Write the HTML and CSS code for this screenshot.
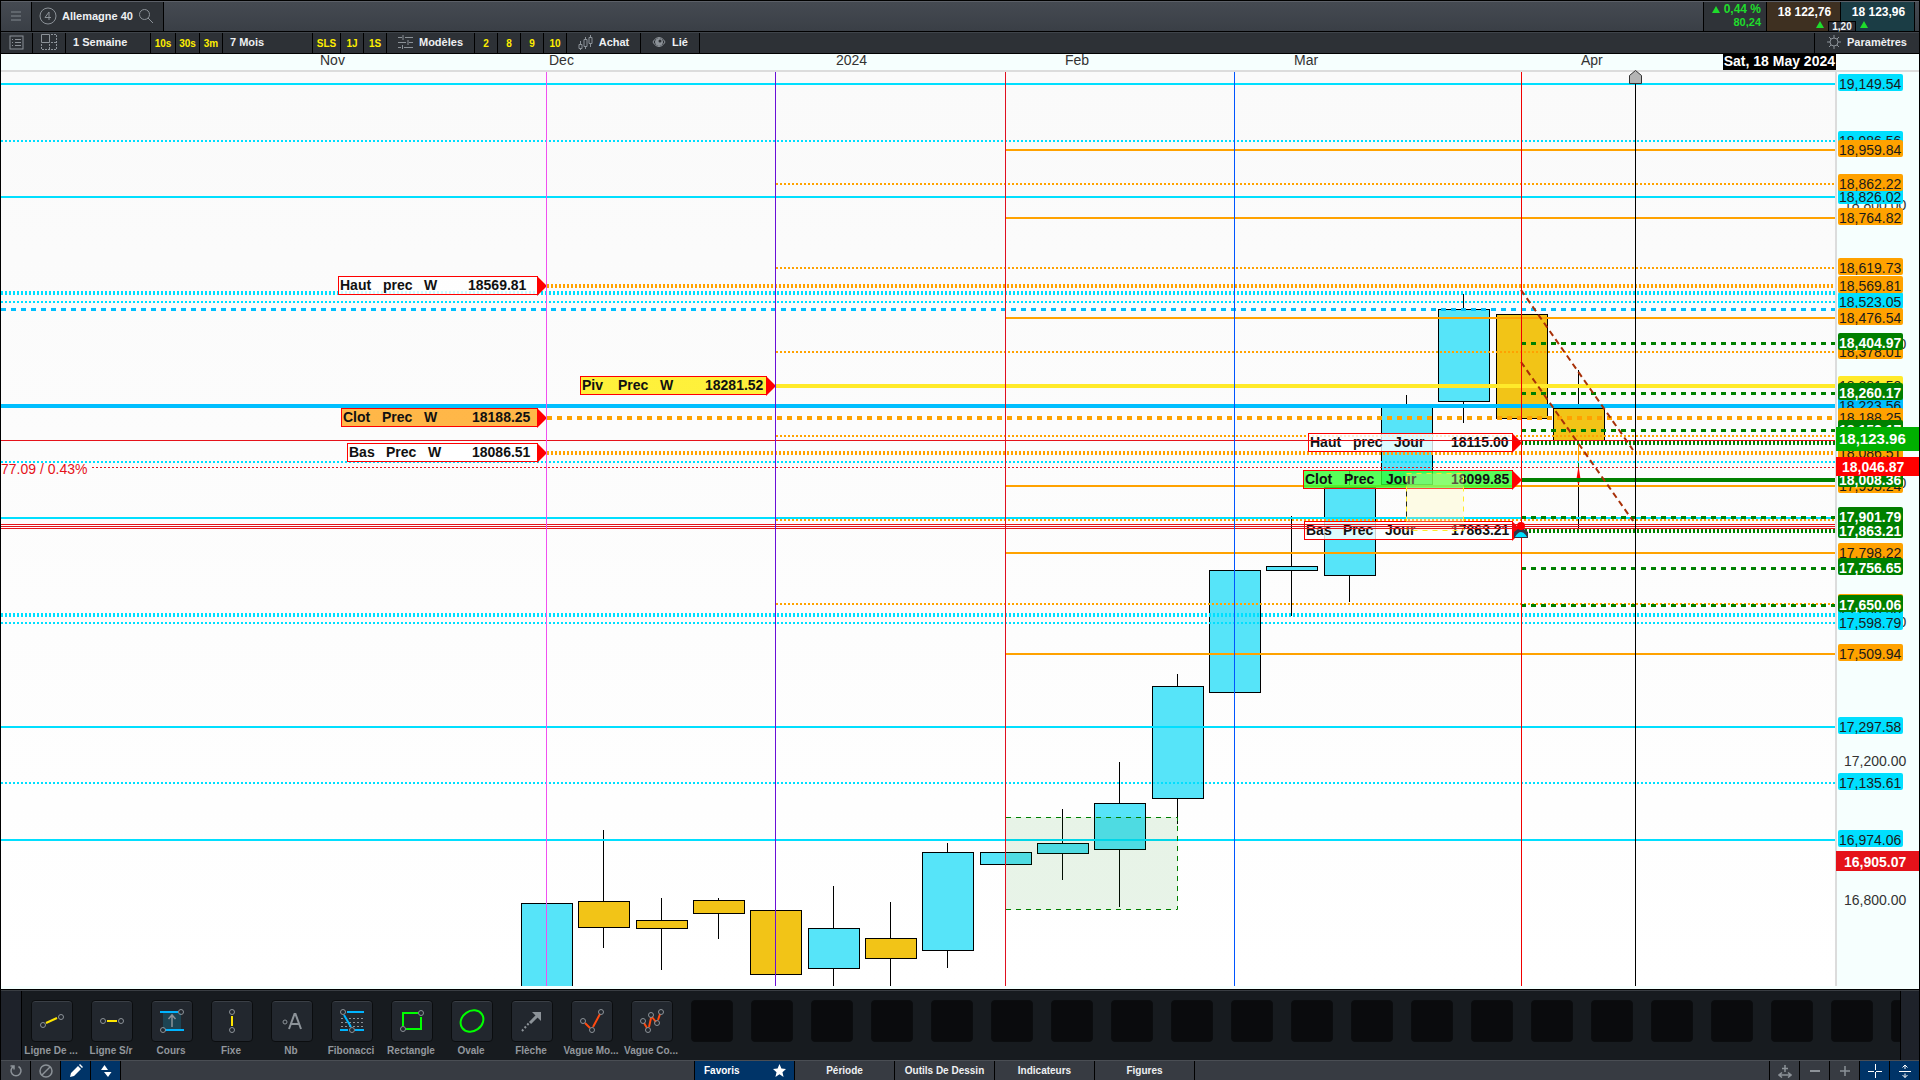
FILE: index.html
```html
<!DOCTYPE html>
<html lang="fr">
  <head>
    <meta charset="UTF-8" />
    <meta name="viewport" content="width=device-width, initial-scale=1.0" />
    <title>Allemagne 40</title>
    <link rel="stylesheet" href="styles.css">
  </head>

  <body>
    <header class="title-bar">
      <button class="menu-btn" aria-label="Menu">
        <svg width="12" height="12" viewBox="0 0 12 12"><path d="M1 2h10M1 6h10M1 10h10" stroke="#60666d" stroke-width="2" /></svg>
      </button>
      <button class="market-tab">
        <svg class="icon" width="18" height="18" viewBox="0 0 18 18"><circle cx="9" cy="9" r="8" /><path d="M10 13V5L6 10.500h6" /></svg>
        <span>Allemagne 40</span>
        <svg class="icon" width="16" height="16" viewBox="0 0 16 16"><circle cx="6.500" cy="6.500" r="5" /><path d="M10 10l5 5" /></svg>
      </button>
      <div class="change">
        <span><i class="up"></i>0,44 %</span>
        <small>80,24</small>
      </div>
      <button class="quote sell">18 122,76 <i class="up"></i></button>
      <button class="quote buy">18 123,96 <i class="up"></i></button>
      <span class="spread">1,20</span>
    </header>

    <nav class="toolbar">
      <button class="w32" aria-label="Liste">
        <svg class="icon" width="15" height="15" viewBox="0 0 15 15"><rect x="1" y="1" width="13" height="13" /><path d="M3 4.500h1M3 7.500h1M3 10.500h1M6 4.500h6M6 7.500h6M6 10.500h6" /></svg>
      </button>
      <button class="w33" aria-label="Disposition">
        <svg class="icon" width="16" height="16" viewBox="0 0 16 16"><path d="M8.500 .5h-8v8h8z" /><path d="M10 .5h5.500v15H.5V10M8.500 10v5M10 8.500h5" stroke-dasharray="2 1" /></svg>
      </button>
      <button class="w85 left">1 Semaine</button>
      <button class="w25 short">10s</button>
      <button class="w24 short">30s</button>
      <button class="w23 short">3m</button>
      <button class="w90 left">7 Mois</button>
      <button class="w28 short">SLS</button>
      <button class="w23 short">1J</button>
      <button class="w23 short">1S</button>
      <button class="w88">
        <svg class="icon" width="15" height="14" viewBox="0 0 15 14"><path d="M0 2.500h4M7 2.500h8M0 7.500h8M11 7.500h4M0 12.500h3M6 12.500h9M5 0v5M10 5v5M4.500 10v4" /></svg>
        <span>Modèles</span>
      </button>
      <button class="w23 short">2</button>
      <button class="w23 short">8</button>
      <button class="w23 short">9</button>
      <button class="w23 short">10</button>
      <button class="w74">
        <svg class="icon" width="15" height="15" viewBox="0 0 15 15"><path d="M1 9.500h3v4H1zM6 4.500h3v7H6zM11 2.500h3v6h-3zM2.500 6v3M2.500 13v2M7.500 2v2M7.500 12v2M12.500 0v2M12.500 9v3" /></svg>
        <span>Achat</span>
      </button>
      <button class="w59">
        <svg class="icon" width="14" height="12" viewBox="0 0 14 12"><path d="M1 6c3-6 9-6 12 0c-3 6-9 6-12 0z" /><circle cx="7" cy="6" r="3.500" fill="#8c9298" /><circle cx="8" cy="5" r="1.500" fill="#2d3136" stroke="none" /></svg>
        <span>Lié</span>
      </button>
      <button class="settings">
        <svg class="icon" width="14" height="14" viewBox="0 0 14 14"><circle cx="7" cy="7" r="4" /><path d="M7 0v3M7 11v3M0 7h3M11 7h3M2 2l2 2M10 10l2 2M2 12l2-2M10 4l2-2" /></svg>
        <span>Paramètres</span>
      </button>
    </nav>

    <main class="chart">
      <svg id="plot" class="plot" role="img" aria-label="Allemagne 40, 1 semaine"></svg>
      <svg id="prices" class="prices" role="img" aria-label="Prix"></svg>
    </main>

    <section class="favorites">
      <div class="gutter"></div>
      <div class="tools" id="tools">
        <div class="tool">
          <button aria-labelledby="t1"><svg class="icon" viewBox="0 0 40 40"><path class="yellow" d="M14 22l11-5" /><circle cx="11" cy="24" r="2.500" /><circle cx="29" cy="16" r="2.500" /></svg></button>
          <span id="t1">Ligne De ...</span>
        </div>
        <div class="tool">
          <button aria-labelledby="t2"><svg class="icon" viewBox="0 0 40 40"><path class="yellow" d="M15 20h10" /><circle cx="11" cy="20" r="2.500" /><circle cx="29" cy="20" r="2.500" /></svg></button>
          <span id="t2">Ligne S/r</span>
        </div>
        <div class="tool">
          <button aria-labelledby="t3"><svg class="icon" viewBox="0 0 40 40"><rect x="11" y="12" width="18" height="16" fill="#1d4453" stroke="none" /><path class="blue" d="M8 11h18M13 29h19" /><path d="M20 26V14M16.500 18L20 14l3.500 4" stroke-width="1.500" /><circle cx="29" cy="11" r="2.500" /><circle cx="11" cy="29" r="2.500" /></svg></button>
          <span id="t3">Cours</span>
        </div>
        <div class="tool">
          <button aria-labelledby="t4"><svg class="icon" viewBox="0 0 40 40"><path class="yellow" d="M20 15v10" /><circle cx="20" cy="11" r="2.500" /><circle cx="20" cy="29" r="2.500" /></svg></button>
          <span id="t4">Fixe</span>
        </div>
        <div class="tool">
          <button aria-labelledby="t5"><svg class="icon" viewBox="0 0 40 40"><circle cx="13" cy="21" r="2" /><path d="M17 28l5.500-15h1L29 28M19 23h8" stroke-width="2" /></svg></button>
          <span id="t5">Nb</span>
        </div>
        <div class="tool">
          <button aria-labelledby="t6"><svg class="icon" viewBox="0 0 40 40"><path d="M9 17.500h23M9 21.500h23M9 25.500h23" stroke-dasharray="2 2" /><path class="blue" d="M15 11h17M8 29h8M23 29h9M12 14l7 12" /><circle cx="11" cy="11" r="2.500" /><circle cx="20" cy="29" r="2.500" /></svg></button>
          <span id="t6">Fibonacci</span>
        </div>
        <div class="tool">
          <button aria-labelledby="t7"><svg class="icon" viewBox="0 0 40 40"><path class="green" d="M26 12H11v13M29 16v12H14" /><circle cx="29" cy="12" r="2.500" /><circle cx="11" cy="28" r="2.500" /></svg></button>
          <span id="t7">Rectangle</span>
        </div>
        <div class="tool">
          <button aria-labelledby="t8"><svg class="icon" viewBox="0 0 40 40"><ellipse class="green" cx="20" cy="20" rx="12" ry="10" transform="rotate(-35 20 20)" /></svg></button>
          <span id="t8">Ovale</span>
        </div>
        <div class="tool">
          <button aria-labelledby="t9"><svg class="icon" viewBox="0 0 40 40"><path d="M10 30l7-8" stroke-width="2" stroke-dasharray="2 2" /><path d="M18 22l9-9" stroke-width="3" /><path d="M20 11h9v9z" fill="#8c9298" stroke="none" /></svg></button>
          <span id="t9">Flèche</span>
        </div>
        <div class="tool">
          <button aria-labelledby="t10"><svg class="icon" viewBox="0 0 40 40"><path class="red" d="M13 22l5 5M21 26l7-13" /><circle cx="11" cy="20" r="2.500" /><circle cx="20" cy="29" r="2.500" /><circle cx="29" cy="11" r="2.500" /></svg></button>
          <span id="t10">Vague Mo...</span>
        </div>
        <div class="tool">
          <button aria-labelledby="t11"><svg class="icon" viewBox="0 0 40 40"><path class="red" d="M12 22l3 5M17 26l2-9M20 16l4 5M26 19l2-6" /><circle cx="11" cy="20" r="2.500" /><circle cx="16" cy="29" r="2.500" /><circle cx="19" cy="14" r="2.500" /><circle cx="25" cy="22" r="2.500" /><circle cx="29" cy="11" r="2.500" /></svg></button>
          <span id="t11">Vague Co...</span>
        </div>
      </div>
      <div class="gutter"></div>
    </section>

    <footer class="bottom-bar">
      <div class="group">
        <button aria-label="Recharger"><svg class="icon" width="14" height="14" viewBox="0 0 14 14"><path d="M9.500 2.500a5 5 0 1 1-5 0M1.500 2h3.500v3.500" stroke-width="1.500" /></svg></button>
        <button aria-label="Effacer"><svg class="icon" width="14" height="14" viewBox="0 0 14 14"><circle cx="7" cy="7" r="6" stroke-width="1.500" /><path d="M3 11l8-8" stroke-width="1.500" /></svg></button>
        <button class="on" aria-label="Dessiner"><svg width="14" height="14" viewBox="0 0 14 14" fill="#fff"><path d="M1 13l1-4 7-7 3 3-7 7zM10 1l1-1 3 3-1 1z" /></svg></button>
        <button class="on" aria-label="Ajuster"><svg width="12" height="12" viewBox="0 0 12 12" fill="#fff"><path d="M1 5l3.500-5L8 5zM4 7h7.500L8 12z" /></svg></button>
      </div>
      <div class="group tabs">
        <button class="on fav">Favoris <svg width="13" height="13" viewBox="0 0 24 24" fill="#fff"><path d="M12 0l3.500 8.500L24 9l-6.500 6 2 9L12 19l-7.500 5 2-9L0 9l8.500-.5z" /></svg></button>
        <button>Période</button>
        <button>Outils De Dessin</button>
        <button>Indicateurs</button>
        <button>Figures</button>
      </div>
      <div class="group right">
        <button aria-label="Largeur"><svg class="icon" width="14" height="14" viewBox="0 0 14 14"><path d="M7 1v7M4 4.500h6M1 11h12M4 8.500L1 11l3 2.500M10 8.500l3 2.500-3 2.500" stroke-width="1.500" /></svg></button>
        <button aria-label="Zoom arrière"><svg class="icon" width="14" height="14" viewBox="0 0 14 14"><path d="M2 7h10" stroke-width="2" /></svg></button>
        <button aria-label="Zoom avant"><svg class="icon" width="14" height="14" viewBox="0 0 14 14"><path d="M2 7h10M7 2v10" stroke-width="1.500" /></svg></button>
        <button class="on" aria-label="Curseur"><svg width="14" height="14" viewBox="0 0 14 14" stroke="#fff"><path d="M0 7.500h6M8 7.500h6M7.500 0v6M7.500 8v6" /></svg></button>
        <button class="on" aria-label="Hauteur"><svg width="14" height="14" viewBox="0 0 14 14" fill="none" stroke="#fff"><path d="M1 7.500h12M7 1v4M7 9.500v4M4.500 3.500L7 1l2.500 2.500M4.500 11L7 13.500 9.500 11" /></svg></button>
      </div>
    </footer>

    <script src="chart.js"></script>
  </body>
</html>
```

FILE: styles.css
```css
* {
  margin: 0;
  padding: 0;
  box-sizing: border-box;
}

body {
  min-height: 100vh;
  display: flex;
  flex-direction: column;
  background: #1a1e24;
  border: 1px solid #000;
  border-bottom: none;
  color: #eef0f2;
  font-family: "Liberation Sans", Arial, sans-serif;
  font-size: 11px;
  font-weight: bold;
  overflow: hidden;
}

button {
  display: flex;
  align-items: center;
  justify-content: center;
  background: none;
  border: none;
  color: inherit;
  font: inherit;
  white-space: nowrap;
  cursor: pointer;
}

.icon {
  fill: none;
  stroke: #8c9298;
  stroke-width: 1;
}

/* Title bar */
.title-bar {
  position: relative;
  display: flex;
  height: 31px;
  background: linear-gradient(#454a52, #3a3f46);
  border-top: 1px solid #5c6068;
  border-bottom: 1px solid #000;
}

.menu-btn {
  width: 31px;
  padding-bottom: 1px;
  border-right: 1px solid #000;
}

.market-tab {
  width: 132px;
  gap: 5px;
  padding: 0 2px 1px 0;
  background: #2f3338;
  border-right: 1px solid #000;
}

.change {
  margin-left: auto;
  width: 64px;
  padding: 0 5px 0 0;
  background: #2f3338;
  border-left: 1px solid #000;
  border-right: 1px solid #000;
  color: #1fdc2c;
  font-size: 12px;
  line-height: 14px;
  text-align: right;
}

.change small {
  display: block;
  font-size: 11px;
  line-height: 12px;
}

.up {
  display: inline-block;
  border: 4px solid transparent;
  border-top: none;
  border-bottom: 7px solid #1fdc2c;
}

.change .up {
  margin-right: 4px;
}

.quote {
  flex-direction: column;
  justify-content: flex-start;
  gap: 2px;
  width: 74px;
  padding: 3px 0 0 2px;
  color: #fff;
  font-size: 12px;
  border-right: 1px solid #000;
}

.sell {
  background: #3e3021;
}

.sell .up {
  margin-left: 30px;
}

.buy {
  background: #1b3d45;
  margin-right: 4px;
}

.buy .up {
  margin-right: 30px;
}

.spread {
  position: absolute;
  right: 63px;
  bottom: 0;
  width: 28px;
  background: #2a2e35;
  border: 1px solid #000;
  border-bottom: none;
  font-size: 10px;
  line-height: 9px;
  text-align: center;
}

/* Toolbar */
.toolbar {
  display: flex;
  height: 22px;
  background: #2d3136;
  border-top: 1px solid #3f444a;
  border-bottom: 1px solid #000;
}

.toolbar button {
  gap: 6px;
  padding-bottom: 2px;
  border-right: 1px solid #000;
}

.toolbar .left {
  justify-content: flex-start;
  padding-left: 7px;
}

.toolbar .short {
  padding-bottom: 0;
  color: #ffee00;
  font-size: 10px;
}

.toolbar .settings {
  width: 105px;
  margin-left: auto;
  border-left: 1px solid #000;
  border-right: none;
}

.w23 { width: 23px; }
.w24 { width: 24px; }
.w25 { width: 25px; }
.w28 { width: 28px; }
.w32 { width: 32px; }
.w33 { width: 33px; }
.w59 { width: 59px; }
.w74 { width: 74px; }
.w85 { width: 85px; }
.w88 { width: 88px; }
.w90 { width: 90px; }

/* Chart */
.chart {
  flex: 1;
  display: flex;
  min-height: 0;
  background: #f6fffe;
}

.plot {
  flex: 1;
  min-width: 0;
  height: 935px;
  margin-left: -1px;
  overflow: visible;
}

.prices {
  width: 84px;
  height: 935px;
}

.chart text {
  font-size: 14px;
  font-weight: normal;
  fill: #333;
}

.chart text.tag {
  fill: #1a1a1a;
}

.chart text.bold {
  font-weight: bold;
  fill: #111;
}

.chart text.white {
  font-weight: bold;
  fill: #fff;
}

.chart text.red-text {
  fill: #e5121a;
}

.chart text.big {
  font-size: 15px;
}

.chart line,
.chart .candle rect {
  shape-rendering: crispEdges;
}

.chart line.trend {
  shape-rendering: auto;
  stroke: #a83008;
  stroke-width: 2;
  stroke-dasharray: 6 4;
}

.candle {
  stroke: #000;
}

.candle.rise {
  fill: #56e4f9;
}

.candle.fall {
  fill: #f2c417;
}

.dotted {
  stroke-dasharray: 2 2;
}

.dashed {
  stroke-dasharray: 5 5;
}

/* Favorites */
.favorites {
  display: flex;
  height: 71px;
  background: #171b1f;
  border-top: 1px solid #000;
  box-shadow: inset 0 1px #3a3e43;
}

.gutter {
  width: 21px;
  margin-top: 1px;
  background: #1e222a;
  border-right: 1px solid #000;
}

.gutter:last-child {
  width: 19px;
  border-left: 1px solid #000;
  border-right: none;
}

.tools {
  flex: 1;
  display: flex;
  min-width: 0;
  overflow: hidden;
}

.tool {
  flex: none;
  width: 60px;
  padding: 10px 9px 0;
}

.tool button,
.slot {
  width: 42px;
  height: 42px;
  border: 1px solid #0b0d0f;
  border-radius: 4px;
}

.tool button {
  background: #22272e;
  box-shadow: inset 0 1px #3a3f46;
}

.slot {
  background: #0a0b0d;
}

.tool span {
  display: flex;
  justify-content: center;
  margin: 3px 2px 0 0;
  color: #92979d;
  font-size: 10px;
  line-height: 12px;
  white-space: nowrap;
}

.tool .icon {
  width: 40px;
  height: 40px;
}

.icon .yellow { stroke: #ffe600; stroke-width: 2; }
.icon .blue { stroke: #00b4ff; stroke-width: 2; }
.icon .green { stroke: #00ff00; stroke-width: 2; }
.icon .red { stroke: #ff4a10; stroke-width: 2; }

/* Bottom bar */
.bottom-bar {
  display: flex;
  justify-content: space-between;
  height: 20px;
  background: #373b42;
  border-top: 1px solid #4a4e54;
}

.group {
  display: flex;
}

.group button {
  width: 30px;
  border-right: 1px solid #000;
}

.right button {
  border-left: 1px solid #000;
  border-right: none;
}

.tabs {
  box-shadow: -1px 0 #000;
  font-size: 10px;
}

.tabs button {
  width: 100px;
}

.tabs .fav {
  justify-content: space-between;
  padding: 0 8px 0 9px;
}

.group .on {
  background: #003468;
  color: #fff;
}
```

FILE: chart.js
```js
const NS = "http://www.w3.org/2000/svg";

const CYAN = "#00dfff";
const SKY = "#00bfff";
const ORANGE = "#ffa200";
const GREEN = "#008000";
const YELLOW = "#ffea2a";
const RED = "#e5121a";

function add(parent, tag, attrs, text) {
  const el = document.createElementNS(NS, tag);
  for (const key in attrs) el.setAttribute(key, attrs[key]);
  if (text !== undefined) el.textContent = text;
  parent.appendChild(el);
  return el;
}

// [left, open/close top, bottom, high, low, direction]
const candles = [
  [521, 903, 987, 903, 987, "rise"],
  [578, 901, 927, 830, 948, "fall"],
  [636, 920, 928, 898, 970, "fall"],
  [693, 900, 913, 898, 939, "fall"],
  [750, 910, 974, 910, 974, "fall"],
  [808, 928, 968, 886, 986, "rise"],
  [865, 938, 958, 902, 986, "fall"],
  [922, 852, 950, 843, 968, "rise"],
  [980, 852, 864, 852, 864, "rise"],
  [1037, 843, 853, 809, 880, "rise"],
  [1094, 803, 849, 762, 907, "rise"],
  [1152, 686, 798, 674, 824, "rise"],
  [1209, 570, 692, 570, 692, "rise"],
  [1266, 566, 570, 516, 616, "rise"],
  [1324, 487, 575, 471, 602, "rise"],
  [1381, 407, 484, 395, 517, "rise"],
  [1438, 309, 401, 294, 423, "rise"],
  [1496, 314, 418, 314, 418, "fall"],
  [1553, 408, 440, 370, 528, "fall"],
];

// [y, color, thickness, style, start]
const levels = [
  [84, CYAN, 2, "", 1],
  [141, CYAN, 2, "dotted", 1],
  [150, ORANGE, 2, "", 1006],
  [184, ORANGE, 2, "dotted", 776],
  [197, CYAN, 2, "", 1],
  [218, ORANGE, 2, "", 1006],
  [268, ORANGE, 2, "dotted", 776],
  [286, ORANGE, 4, "dotted", 547],
  [293, CYAN, 4, "dotted", 1],
  [302, CYAN, 2, "dotted", 1],
  [309.5, SKY, 3, "dashed", 1],
  [318, ORANGE, 2, "", 1006],
  [343.5, GREEN, 3, "dashed", 1521],
  [352, ORANGE, 2, "dotted", 776],
  [386, YELLOW, 4, "", 776],
  [393.5, GREEN, 3, "dashed", 1521],
  [406, SKY, 4, "", 1],
  [418, ORANGE, 4, "dashed", 547],
  [430.5, GREEN, 3, "dashed", 1521],
  [436, ORANGE, 2, "dotted", 776],
  [443, GREEN, 4, "dotted", 1521],
  [453, ORANGE, 4, "dotted", 547],
  [462, CYAN, 2, "dotted", 1],
  [480, GREEN, 4, "", 1521],
  [486, ORANGE, 2, "", 1006],
  [518, CYAN, 2, "", 1],
  [520, ORANGE, 2, "dotted", 776],
  [517.5, GREEN, 3, "dashed", 1521],
  [531, GREEN, 4, "dotted", 1521],
  [553, ORANGE, 2, "", 1006],
  [568.5, GREEN, 3, "dashed", 1521],
  [604, ORANGE, 2, "dotted", 776],
  [605.5, GREEN, 3, "dashed", 1521],
  [615, CYAN, 4, "dotted", 1],
  [623, CYAN, 2, "dotted", 1],
  [654, ORANGE, 2, "", 1006],
  [727, CYAN, 2, "", 1],
  [783, CYAN, 2, "dotted", 1],
  [840, CYAN, 2, "", 1],
];

const alerts = [
  [440.5, ""],
  [467.5, "dotted"],
  [524.5, ""],
  [526.5, ""],
  [528.5, ""],
];

const dates = [
  [546.5, "#f050f0"],
  [775.5, "#6a10d8"],
  [1005.5, "#e01020"],
  [1234.5, "#0055ff"],
  [1521.5, "#f00000"],
  [1635.5, "#000"],
];

// [left, top, right, fill, [x, word]...]
const flags = [
  [338, 276, 537, "#ffffff", [340, "Haut"], [383, "prec"], [424, "W"], [468, "18569.81"]],
  [580, 376, 766, "#ffee0a", [582, "Piv"], [618, "Prec"], [660, "W"], [705, "18281.52"]],
  [341, 408, 537, "#ffa51a", [343, "Clot"], [382, "Prec"], [424, "W"], [472, "18188.25"]],
  [347, 443, 537, "#ffffff", [349, "Bas"], [386, "Prec"], [428, "W"], [472, "18086.51"]],
  [1308, 433, 1512, "#ffffff", [1310, "Haut"], [1353, "prec"], [1394, "Jour"], [1451, "18115.00"]],
  [1303, 470, 1512, "#30ff30", [1305, "Clot"], [1344, "Prec"], [1386, "Jour"], [1451, "18099.85"]],
  [1304, 521, 1512, "#ffffff", [1306, "Bas"], [1343, "Prec"], [1385, "Jour"], [1451, "17863.21"]],
];

const months = [
  [320, "Nov"],
  [549, "Dec"],
  [836, "2024"],
  [1065, "Feb"],
  [1294, "Mar"],
  [1581, "Apr"],
];

// later tags lie over the earlier ones
const tags = [
  [84, CYAN, "19,149.54"],
  [141, CYAN, "18,986.56"],
  [150, ORANGE, "18,959.84"],
  [197, CYAN, "18,826.02"],
  [184, ORANGE, "18,862.22"],
  [218, ORANGE, "18,764.82"],
  [268, ORANGE, "18,619.73"],
  [302, CYAN, "18,523.05"],
  [286, ORANGE, "18,569.81"],
  [318, ORANGE, "18,476.54"],
  [352, ORANGE, "18,378.01"],
  [343, GREEN, "18,404.97"],
  [386, YELLOW, "18,281.52"],
  [406, SKY, "18,223.56"],
  [393, GREEN, "18,260.17"],
  [418, ORANGE, "18,188.25"],
  [430, GREEN, "18,152.17"],
  [453, ORANGE, "18,086.51"],
  [486, ORANGE, "17,995.24"],
  [480, GREEN, "18,008.36"],
  [531, GREEN, "17,863.21"],
  [517, GREEN, "17,901.79"],
  [553, ORANGE, "17,798.22"],
  [568, GREEN, "17,756.65"],
  [604, ORANGE, "17,653.00"],
  [615, CYAN, "17,620.20"],
  [623, CYAN, "17,598.79"],
  [605, GREEN, "17,650.06"],
  [654, ORANGE, "17,509.94"],
  [727, CYAN, "17,297.58"],
  [783, CYAN, "17,135.61"],
  [840, CYAN, "16,974.06"],
];

const ticks = [
  [210, "18,800.00"],
  [349, "18,400.00"],
  [488, "18,000.00"],
  [627, "17,600.00"],
  [766, "17,200.00"],
  [905, "16,800.00"],
];

function drawPlot() {
  const svg = document.getElementById("plot");
  const defs = add(svg, "defs", {});
  const fade = add(defs, "linearGradient", { id: "fade", x2: 0, y2: 1 });
  add(fade, "stop", { offset: 0, "stop-color": "#fafafa" });
  add(fade, "stop", { offset: 1, "stop-color": "#ffffff" });

  const g = add(svg, "g", { transform: "translate(0 -54)" });
  add(g, "rect", { x: 0, y: 72, width: "100%", height: 914, fill: "url(#fade)" });
  add(g, "rect", { x: 0, y: 70, width: "100%", height: 2, fill: "#dcdcdc" });
  months.forEach(([x, name]) => add(g, "text", { x, y: 65 }, name));

  candles.forEach(([x, top, bottom, high, low, dir]) => {
    const c = add(g, "g", { class: "candle " + dir });
    add(c, "line", { x1: x + 25.5, x2: x + 25.5, y1: high, y2: low });
    add(c, "rect", { x: x + 0.5, y: top + 0.5, width: 51, height: bottom - top });
  });

  // colored end of the last wick
  add(g, "line", { x1: 1578.5, x2: 1578.5, y1: 443, y2: 463, stroke: ORANGE });
  add(g, "line", { x1: 1578.5, x2: 1578.5, y1: 463, y2: 472, stroke: GREEN });
  add(g, "path", { d: "M1578.500 466l2 13-2 6-2-6z", fill: "#f00" });

  levels.forEach(([y, color, size, style, x1]) =>
    add(g, "line", { x1, x2: "100%", y1: y, y2: y, stroke: color, "stroke-width": size, class: style })
  );

  add(g, "line", { class: "trend", x1: 1521, y1: 290, x2: 1633, y2: 450 });
  add(g, "line", { class: "trend", x1: 1521, y1: 362, x2: 1633, y2: 521 });

  flags.forEach(([left, top, right, fill, ...words]) => {
    add(g, "rect", { x: left + 0.5, y: top + 0.5, width: right - left, height: 18, fill, "fill-opacity": 0.8, stroke: "#f00" });
    add(g, "path", { d: `M${right} ${top}l10 10-10 10z`, fill: "#f00" });
    words.forEach(([x, word]) => add(g, "text", { x, y: top + 14, class: "bold" }, word));
  });

  add(g, "rect", { x: 1406.5, y: 473.5, width: 57, height: 57, fill: "#fff8b0", "fill-opacity": 0.3, stroke: YELLOW, class: "dashed" });

  alerts.forEach(([y, style]) => add(g, "line", { x1: style ? 92 : 1, x2: "100%", y1: y, y2: y, stroke: RED, class: style }));
  dates.forEach(([x, stroke]) => add(g, "line", { x1: x, x2: x, y1: 72, y2: 986, stroke }));

  add(g, "rect", { x: 1006, y: 817, width: 172, height: 93, fill: GREEN, "fill-opacity": 0.09 });
  add(g, "path", { d: "M1006 817.500h171.500v92H1006", fill: "none", stroke: GREEN, class: "dashed" });

  // markers on the date lines
  add(g, "path", { d: "M1629.500 83.500v-8l6-5 6 5v8z", fill: "#b4b4b4", stroke: "#333" });
  add(g, "path", { d: "M1514 538v-6l4-3h6l4 3v6z", fill: "#334" });
  add(g, "path", { d: "M1515 537q6-10 12 0z", fill: CYAN });
  add(g, "circle", { cx: 1521, cy: 526, r: 4, fill: "#f00" });

  add(g, "text", { x: 1, y: 474, class: "red-text" }, "77.09 / 0.43%");
  add(g, "rect", { x: 0, y: 986, width: "100%", height: 3, fill: "#f6fffe" });
  add(g, "rect", { x: 0, y: 54, width: 1, height: 935, fill: "#000" });

  // cursor date, kept at the right edge
  const cursor = add(svg, "svg", { x: "100%", y: 0, overflow: "visible" });
  add(cursor, "rect", { x: -112, y: 0, width: 113, height: 16, fill: "#000" });
  add(cursor, "text", { x: 0, y: 12, class: "white", "text-anchor": "end" }, "Sat, 18 May 2024");
}

function drawPrices() {
  const g = add(document.getElementById("prices"), "g", { transform: "translate(0 -54)" });
  add(g, "rect", { x: 0, y: 70, width: 84, height: 2, fill: "#dcdcdc" });
  add(g, "rect", { x: 0, y: 72, width: 2, height: 914, fill: "#dcdcdc" });
  ticks.forEach(([y, price]) => add(g, "text", { x: 9, y }, price));

  tags.forEach(([y, fill, price]) => {
    add(g, "rect", { x: 3, y: y - 10, width: 65, height: 17, rx: 2, fill });
    add(g, "text", { x: 4, y: y + 5, class: fill === GREEN ? "white" : "tag" }, price);
  });

  add(g, "rect", { x: 1, y: 427, width: 83, height: 24, fill: "#00b000" });
  add(g, "text", { x: 4, y: 444, class: "white big" }, "18,123.96");
  add(g, "rect", { x: 1, y: 457, width: 83, height: 19, fill: "#f00" });
  add(g, "text", { x: 7, y: 472, class: "white" }, "18,046.87");
  add(g, "rect", { x: 1, y: 851, width: 83, height: 20, fill: RED });
  add(g, "text", { x: 9, y: 867, class: "white" }, "16,905.07");
}

// empty places after the last favorite
function drawSlots() {
  const tools = document.getElementById("tools");
  for (let i = 0; i < 21; i++) {
    const tool = document.createElement("div");
    tool.className = "tool";
    tool.innerHTML = '<div class="slot"></div>';
    tools.appendChild(tool);
  }
}

drawPlot();
drawPrices();
drawSlots();
```
